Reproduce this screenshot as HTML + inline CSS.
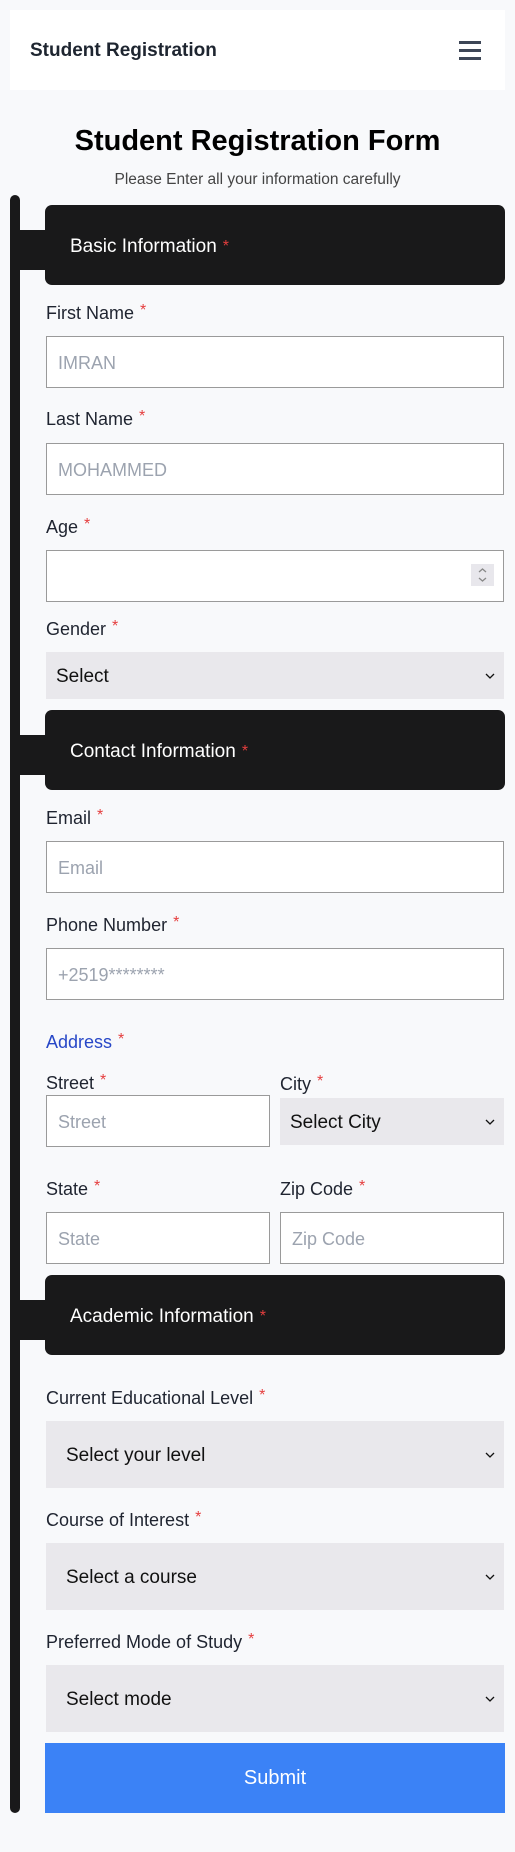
<!DOCTYPE html>
<html><head><meta charset="utf-8"><style>
*{margin:0;padding:0;box-sizing:border-box}
body{width:515px;height:1852px;background:#f8f9fb;position:relative;font-family:"Liberation Sans",sans-serif;overflow:hidden}
.a{position:absolute}
.lbl{position:absolute;left:46px;height:24px;line-height:24px;font-size:18px;color:#1f2430;white-space:nowrap}
.lbl b,.sh b{color:#e53e3e;font-weight:normal;font-size:16px;vertical-align:top;margin-left:6px;line-height:20px}
.in{position:absolute;background:#fff;border:1.5px solid #9a9a9a;font-size:18px;color:#9ca3af;padding-left:11px;padding-top:3px;display:flex;align-items:center}
.sel{position:absolute;background:#e9e8ec;font-size:19px;color:#111;display:flex;align-items:center;padding-top:3px}
.sel svg{position:absolute;right:8px;top:50%;margin-top:-5px}
.sh{position:absolute;left:45px;width:460px;height:80px;background:#19191a;border-radius:7px;color:#fff;font-size:19px;padding-left:25px;padding-top:3px;display:flex;align-items:center}
.con{position:absolute;left:20px;width:26px;height:40px;background:#19191a}
</style></head><body>
<div class="a" style="left:10px;top:10px;width:495px;height:80px;background:#fff"></div>
<div class="a" style="left:30px;top:39px;font-size:19px;font-weight:bold;color:#1e2530;line-height:24px">Student Registration</div>
<div class="a" style="left:459px;top:41px;width:22px;height:2.5px;background:#3d4656"></div>
<div class="a" style="left:459px;top:49px;width:22px;height:2.5px;background:#3d4656"></div>
<div class="a" style="left:459px;top:57px;width:22px;height:2.5px;background:#3d4656"></div>
<div class="a" style="left:0;width:515px;top:123px;text-align:center;font-size:29px;font-weight:bold;color:#000;line-height:36px">Student Registration Form</div>
<div class="a" style="left:0;width:515px;top:170px;text-align:center;font-size:15.5px;color:#444;line-height:20px">Please Enter all your information carefully</div>
<div class="a" style="left:10px;top:195px;width:10px;height:1618px;background:#19191a;border-radius:5px"></div>

<div class="con" style="top:230px"></div>
<div class="sh" style="top:205px">Basic Information<b>*</b></div>
<div class="lbl" style="top:301px">First Name<b>*</b></div>
<div class="in" style="left:46px;top:336px;width:458px;height:52px">IMRAN</div>
<div class="lbl" style="top:407px">Last Name<b>*</b></div>
<div class="in" style="left:46px;top:443px;width:458px;height:52px">MOHAMMED</div>
<div class="lbl" style="top:515px">Age<b>*</b></div>
<div class="in" style="left:46px;top:550px;width:458px;height:52px"><div class="a" style="right:9px;top:13px;width:23px;height:22px;background:#e8e7ec"><svg width="23" height="22" viewBox="0 0 23 22"><path d="M8 8l3.5-3 3.5 3M8 14l3.5 3 3.5-3" fill="none" stroke="#888" stroke-width="1.3"/></svg></div></div>
<div class="lbl" style="top:617px">Gender<b>*</b></div>
<div class="sel" style="left:46px;top:652px;width:458px;height:47px;padding-left:10px">Select<svg width="12" height="10" viewBox="0 0 12 10"><path d="M2 3l4 4 4-4" fill="none" stroke="#111" stroke-width="1.3"/></svg></div>

<div class="con" style="top:735px"></div>
<div class="sh" style="top:710px">Contact Information<b>*</b></div>
<div class="lbl" style="top:806px">Email<b>*</b></div>
<div class="in" style="left:46px;top:841px;width:458px;height:52px">Email</div>
<div class="lbl" style="top:913px">Phone Number<b>*</b></div>
<div class="in" style="left:46px;top:948px;width:458px;height:52px">+2519********</div>
<div class="lbl" style="top:1030px;color:#2747c7">Address<b>*</b></div>
<div class="lbl" style="top:1071px">Street<b>*</b></div>
<div class="lbl" style="left:280px;top:1072px">City<b>*</b></div>
<div class="in" style="left:46px;top:1095px;width:224px;height:52px">Street</div>
<div class="sel" style="left:280px;top:1098px;width:224px;height:47px;padding-left:10px">Select City<svg width="12" height="10" viewBox="0 0 12 10"><path d="M2 3l4 4 4-4" fill="none" stroke="#111" stroke-width="1.3"/></svg></div>
<div class="lbl" style="top:1177px">State<b>*</b></div>
<div class="lbl" style="left:280px;top:1177px">Zip Code<b>*</b></div>
<div class="in" style="left:46px;top:1212px;width:224px;height:52px">State</div>
<div class="in" style="left:280px;top:1212px;width:224px;height:52px">Zip Code</div>

<div class="con" style="top:1300px"></div>
<div class="sh" style="top:1275px">Academic Information<b>*</b></div>
<div class="lbl" style="top:1386px">Current Educational Level<b>*</b></div>
<div class="sel" style="left:46px;top:1421px;width:458px;height:67px;padding-left:20px">Select your level<svg width="12" height="10" viewBox="0 0 12 10"><path d="M2 3l4 4 4-4" fill="none" stroke="#111" stroke-width="1.3"/></svg></div>
<div class="lbl" style="top:1508px">Course of Interest<b>*</b></div>
<div class="sel" style="left:46px;top:1543px;width:458px;height:67px;padding-left:20px">Select a course<svg width="12" height="10" viewBox="0 0 12 10"><path d="M2 3l4 4 4-4" fill="none" stroke="#111" stroke-width="1.3"/></svg></div>
<div class="lbl" style="top:1630px">Preferred Mode of Study<b>*</b></div>
<div class="sel" style="left:46px;top:1665px;width:458px;height:67px;padding-left:20px">Select mode<svg width="12" height="10" viewBox="0 0 12 10"><path d="M2 3l4 4 4-4" fill="none" stroke="#111" stroke-width="1.3"/></svg></div>
<div class="a" style="left:45px;top:1743px;width:460px;height:70px;background:#3b82f6;color:#fff;font-size:20px;display:flex;align-items:center;justify-content:center">Submit</div>
</body></html>
